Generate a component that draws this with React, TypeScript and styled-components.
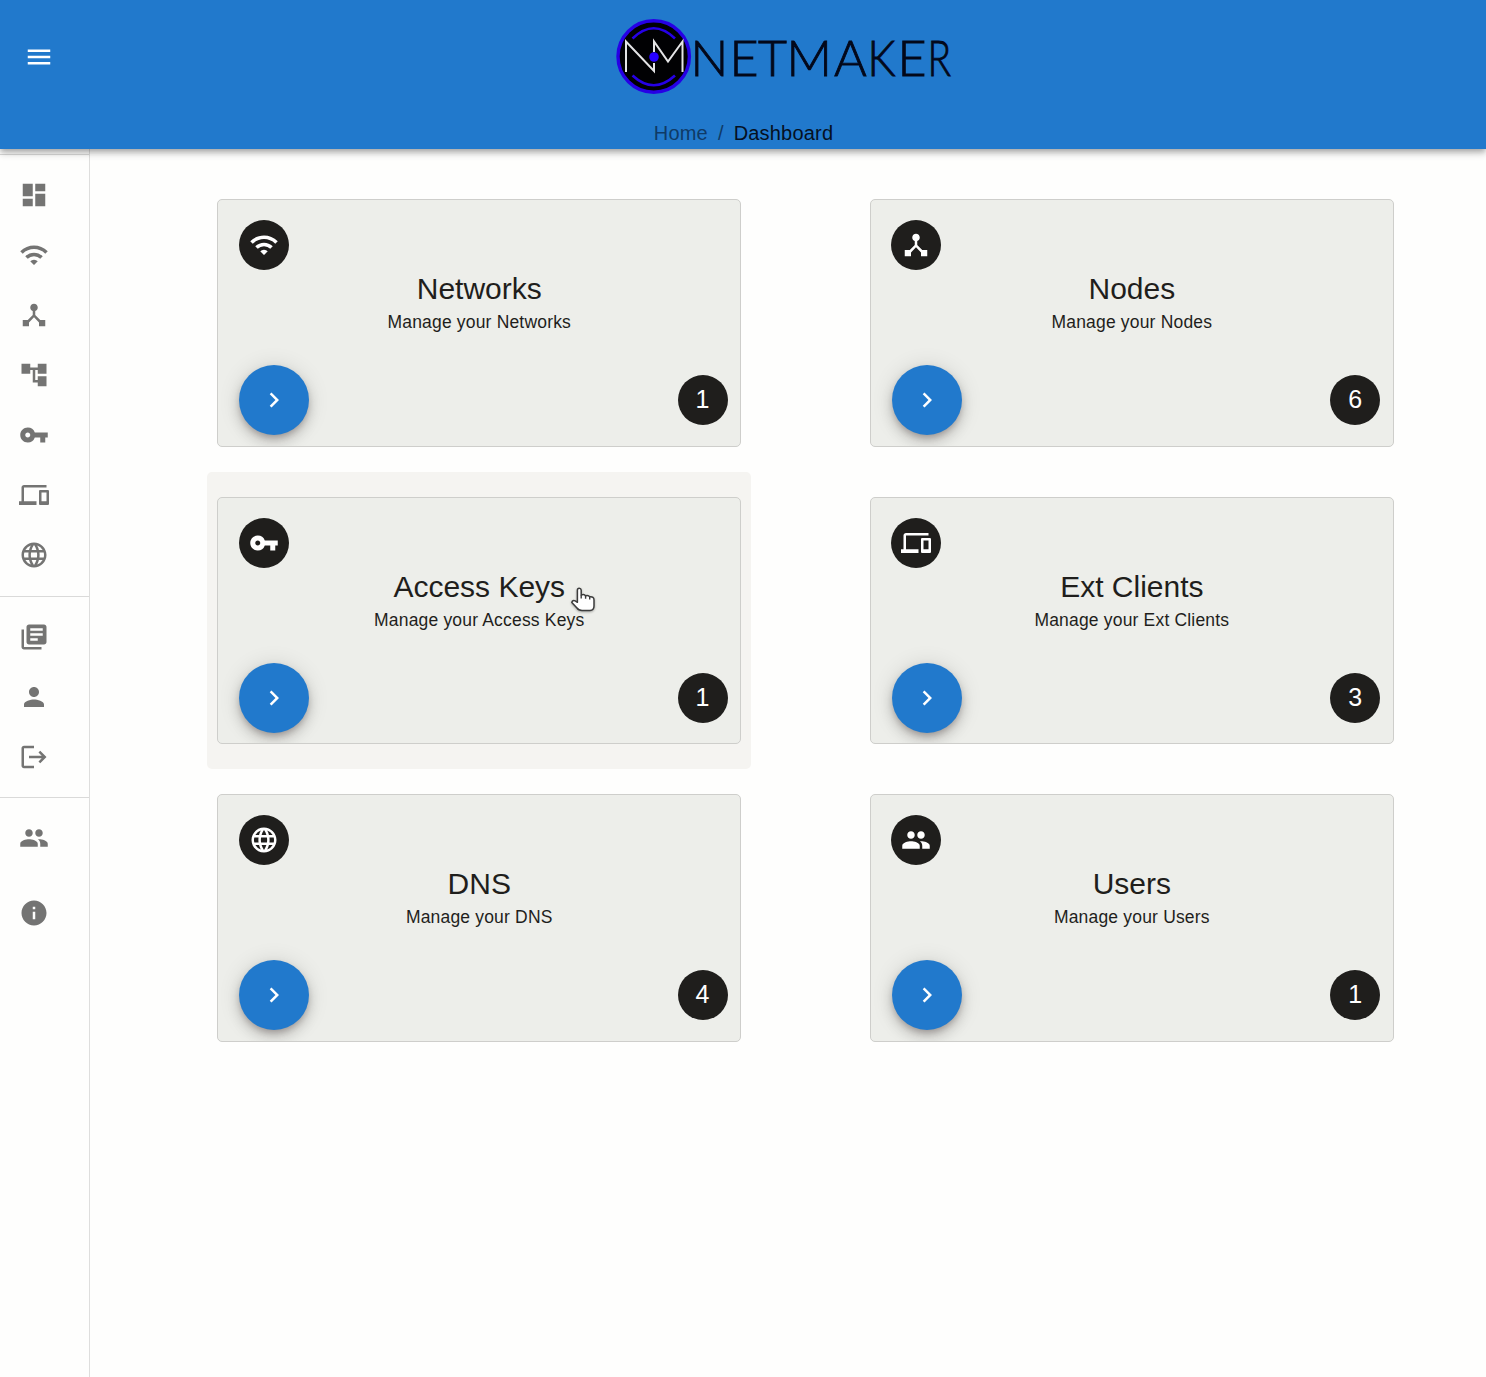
import React from "react";
import styled, { createGlobalStyle } from "styled-components";
import type { IconType } from "react-icons";
import {
  MdAccountTree,
  MdChevronRight,
  MdDashboard,
  MdDeviceHub,
  MdDevices,
  MdInfo,
  MdLanguage,
  MdLibraryBooks,
  MdMenu,
  MdPeople,
  MdPerson,
  MdVpnKey,
  MdWifi,
} from "react-icons/md";

const GlobalStyle = createGlobalStyle`
  *, *::before, *::after { box-sizing: border-box; }
  body {
    margin: 0;
    background: #fefefd;
    color: #1f1e1c;
    font-family: "Liberation Sans", Arial, sans-serif;
  }
`;

const Page = styled.div`
  min-height: 1377px;
  display: flex;
  flex-direction: column;
`;

const Header = styled.header`
  position: relative;
  z-index: 2;
  height: 149px;
  background: #2179cc;
  box-shadow: 0 2.5px 5px -1px rgba(0, 0, 0, 0.2), 0 5px 6px rgba(0, 0, 0, 0.14),
    0 1px 12px rgba(0, 0, 0, 0.12);
  display: grid;
  grid-template-rows: 116px 33px;
`;

const HeaderBar = styled.div`
  display: grid;
  grid-template-columns: 616px 1fr;
  align-items: center;
  padding-bottom: 2px;
`;

const MenuButton = styled.button`
  width: 30px;
  height: 30px;
  margin-left: 24px;
  padding: 0;
  border: 0;
  background: none;
  color: #fff;
  font-size: 30px;
  display: flex;
`;

const LogoSvg = styled.svg`
  display: block;
`;

const Wordmark = styled.text`
  font-family: Lato, sans-serif;
  font-weight: 300;
  font-size: 50px;
  fill: #03081a;
  stroke: #03081a;
  stroke-width: 0.9px;
`;

const Breadcrumbs = styled.nav`
  display: flex;
  justify-content: center;
  gap: 10px;
  padding: 6px 0 0 1px;
  font-size: 20px;
  line-height: 23px;
  letter-spacing: 0.19px;
  color: #0f3a66;
`;

const Current = styled.span`
  color: #05101f;
`;

const Body = styled.div`
  flex: 1;
  display: flex;
`;

const Sidebar = styled.aside`
  width: 90px;
  border-right: 1px solid #dededd;
  padding-top: 5px;
`;

const NavGroup = styled.div<{ $top: number; $bottom: number }>`
  border-top: 1px solid #dadad9;
  padding: ${(p) => p.$top}px 0 ${(p) => p.$bottom}px;
`;

const NavItem = styled.a<{ $gap?: number }>`
  display: flex;
  align-items: center;
  height: 60px;
  margin-top: ${(p) => p.$gap ?? 0}px;
  padding-left: 19px;
  font-size: 30px;
  color: #747473;
`;

const Main = styled.main`
  flex: 1;
  display: grid;
  grid-template-columns: 544px 544px;
  grid-auto-rows: 297.5px;
  column-gap: 108.6px;
  align-content: start;
  padding: 25px 0 0 117px;
`;

const Cell = styled.div<{ $hovered?: boolean }>`
  position: relative;
  padding: 25px 10px;
  border-radius: 5px;
  background: ${(p) => (p.$hovered ? "#f5f4f1" : "transparent")};
`;

const Card = styled.section`
  height: 247.5px;
  overflow: hidden;
  border: 1px solid #cececb;
  border-radius: 5px;
  background: #edeeea;
  display: flex;
  flex-direction: column;
  padding: 20px 12px 10.2px 21px;
`;

const Disc = styled.div`
  flex: none;
  width: 50px;
  height: 50px;
  border-radius: 50%;
  background: #1f1e1c;
  color: #fff;
  display: flex;
  align-items: center;
  justify-content: center;
`;

const IconDisc = styled(Disc)`
  margin-left: -0.2px;
  font-size: 30px;
`;

const CountDisc = styled(Disc)`
  margin-right: 0.2px;
  font-size: 25px;
  line-height: 36px;
  padding: 0 0.5px 2px 0;
`;

const Title = styled.h2`
  margin: 0 -12px 0 -20.5px;
  text-align: center;
  font-size: 30px;
  font-weight: 400;
  line-height: 38px;
`;

const Subtitle = styled.p`
  margin: 2px -12px 0 -20.5px;
  text-align: center;
  font-size: 17.5px;
  line-height: 25px;
  letter-spacing: 0.18px;
`;

const Actions = styled.div`
  margin-top: auto;
  display: flex;
  align-items: center;
  justify-content: space-between;
`;

const Fab = styled.button`
  width: 70px;
  height: 70px;
  padding: 0;
  border: 0;
  border-radius: 50%;
  background: #2179cc;
  color: #fff;
  font-size: 30px;
  display: flex;
  align-items: center;
  justify-content: center;
  box-shadow: 0 3.75px 6.25px -1.25px rgba(20, 5, 5, 0.22),
    0 7.5px 12.5px rgba(20, 5, 5, 0.14), 0 1.25px 22.5px rgba(20, 5, 5, 0.12);
`;

const Pointer = styled.svg`
  position: absolute;
  left: 363px;
  top: 114px;
  filter: drop-shadow(0 1px 1px rgba(0, 0, 0, 0.3));
`;

const LogoutIcon: IconType = () => (
  <svg width="1em" height="1em" viewBox="0 0 24 24" fill="currentColor">
    <path d="m17 7-1.41 1.41L18.17 11H8v2h10.17l-2.58 2.58L17 17l5-5zM4 5h8V3H4c-1.1 0-2 .9-2 2v14c0 1.1.9 2 2 2h8v-2H4V5z" />
  </svg>
);

const Logo = () => (
  <LogoSvg width="360" height="80" viewBox="616 17 360 80">
    <circle cx="653.7" cy="56.5" r="35.7" fill="#010103" stroke="#2600e6" strokeWidth="3.4" />
    <g fill="none" stroke="#2600e6" strokeWidth="2.6">
      <path d="M632.500 38.500Q653.700 18 675 38.500" />
      <path d="M632.500 75.500Q653.700 95 675 75.500" />
    </g>
    <g fill="none" stroke="#e4e4e6" strokeWidth="2">
      <path d="M626 72V41.500L654 71V63" />
      <path d="M654 52V41.500L668 61.500L682.500 41.500V72" />
    </g>
    <circle cx="654" cy="57" r="4.8" fill="#2600ff" />
    <Wordmark y="76">
      <tspan x="690.500 729.500 758 786.500 834">NETMA</tspan>
      <tspan x="867.5" textLength="28" lengthAdjust="spacingAndGlyphs">K</tspan>
      <tspan x="897.500">E</tspan>
      <tspan x="927.5" textLength="23.500" lengthAdjust="spacingAndGlyphs">R</tspan>
    </Wordmark>
  </LogoSvg>
);

const HandPointer = () => (
  <Pointer width="26" height="27" viewBox="0 0 26 27">
    <path
      d="M7.400 16.300V4.200Q7.400 2.300 9.200 2.300T11.200 4.200V9Q14.400 7.800 15.500 9.800Q18.500 8.800 19.700 10.800Q24 10.200 24 14V20Q24 24.400 20 24.400H12Q8.500 24.400 7 22L1.800 16.500Q2.500 13.800 5.200 14.900Z"
      fill="#fff"
      stroke="#3c3c3c"
      strokeWidth="1.500"
      strokeLinejoin="round"
    />
    <path d="M11.200 9V12.500M15.600 9.800V12.800M19.700 10.800V13.500" stroke="#3c3c3c" strokeWidth="1.400" />
  </Pointer>
);

const navGroups: { top: number; bottom: number; items: { icon: IconType; gap?: number }[] }[] = [
  {
    top: 10,
    bottom: 11,
    items: [
      { icon: MdDashboard },
      { icon: MdWifi },
      { icon: MdDeviceHub },
      { icon: MdAccountTree },
      { icon: MdVpnKey },
      { icon: MdDevices },
      { icon: MdLanguage },
    ],
  },
  {
    top: 10,
    bottom: 10,
    items: [{ icon: MdLibraryBooks }, { icon: MdPerson }, { icon: LogoutIcon }],
  },
  { top: 10, bottom: 0, items: [{ icon: MdPeople }, { icon: MdInfo, gap: 15 }] },
];

const cards: { title: string; icon: IconType; count: number; hovered?: boolean }[] = [
  { title: "Networks", icon: MdWifi, count: 1 },
  { title: "Nodes", icon: MdDeviceHub, count: 6 },
  { title: "Access Keys", icon: MdVpnKey, count: 1, hovered: true },
  { title: "Ext Clients", icon: MdDevices, count: 3 },
  { title: "DNS", icon: MdLanguage, count: 4 },
  { title: "Users", icon: MdPeople, count: 1 },
];

export default function App() {
  return (
    <Page>
      <GlobalStyle />
      <Header>
        <HeaderBar>
          <MenuButton aria-label="Menu">
            <MdMenu />
          </MenuButton>
          <Logo />
        </HeaderBar>
        <Breadcrumbs>
          <span>Home</span>
          <span>/</span>
          <Current>Dashboard</Current>
        </Breadcrumbs>
      </Header>
      <Body>
        <Sidebar>
          {navGroups.map((group, g) => (
            <NavGroup key={g} $top={group.top} $bottom={group.bottom}>
              {group.items.map(({ icon: Icon, gap }, i) => (
                <NavItem key={i} $gap={gap}>
                  <Icon />
                </NavItem>
              ))}
            </NavGroup>
          ))}
        </Sidebar>
        <Main>
          {cards.map(({ title, icon: Icon, count, hovered }) => (
            <Cell key={title} $hovered={hovered}>
              <Card>
                <IconDisc>
                  <Icon />
                </IconDisc>
                <Title>{title}</Title>
                <Subtitle>Manage your {title}</Subtitle>
                <Actions>
                  <Fab aria-label={`Open ${title}`}>
                    <MdChevronRight />
                  </Fab>
                  <CountDisc>{count}</CountDisc>
                </Actions>
              </Card>
              {hovered && <HandPointer />}
            </Cell>
          ))}
        </Main>
      </Body>
    </Page>
  );
}
